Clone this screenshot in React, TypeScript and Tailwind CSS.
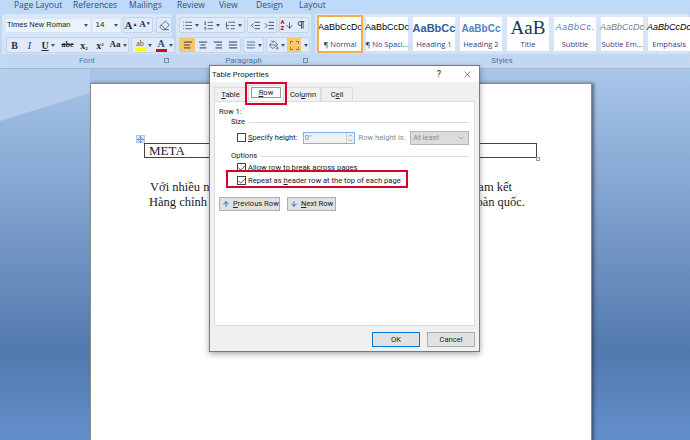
import React from "react";
import { AlignCenter, AlignLeft, AlignRight, AlignJustify, Check, ChevronDown, ChevronUp, IndentDecrease, IndentIncrease, List, ListOrdered, ListTree, Pilcrow, PaintBucket, X, Eraser, ArrowUp, ArrowDown, Move } from "lucide-react";

const Caret = () => <span className="w-0 h-0 border-l-[2.5px] border-r-[2.5px] border-t-[3px] border-l-transparent border-r-transparent border-t-[#44546a] ml-0.5" />;

const Btn = ({ w, active, children }: { w: string; active?: boolean; children: React.ReactNode }) => (
  <div className={`${w} h-[14px] flex items-center justify-center text-[#1f2f4a] ${active ? "bg-[#f8c86c]" : ""}`}>{children}</div>
);

const BtnGroup = ({ children }: { children: React.ReactNode }) => (
  <div className="flex h-[16px] items-center rounded-[2px] border border-[#c3d3e8] bg-[#dfeafa]">{children}</div>
);

const Group = ({ w, label, launcher, children }: { w: string; label: string; launcher?: boolean; children: React.ReactNode }) => (
  <div className={`${w} h-[55px] shrink-0 flex flex-col rounded-[3px] border border-[#c5d8ef] bg-gradient-to-b from-[#dbe8f9] to-[#cfe0f6]`}>
    <div className="flex-1 min-h-0">{children}</div>
    <div className="relative h-[13px] bg-[#c2d8f2] text-center text-[8px] leading-[13px] text-[#4f76ad]">
      {label}
      {launcher && <span className="absolute right-[3px] top-[4px] w-[5px] h-[5px] border border-[#6f8fb8]" />}
    </div>
  </div>
);

const styles = [
  { p: "AaBbCcDc", l: "¶ Normal", c: "text-[9px] text-black", sel: true },
  { p: "AaBbCcDc", l: "¶ No Spaci...", c: "text-[9px] text-black" },
  { p: "AaBbCc", l: "Heading 1", c: "text-[11px] font-bold text-[#2f5c94]" },
  { p: "AaBbCc", l: "Heading 2", c: "text-[10px] font-bold text-[#4f81bd]" },
  { p: "AaB", l: "Title", c: "text-[19px] text-[#17365d] font-['Liberation_Serif',serif]" },
  { p: "AaBbCc.", l: "Subtitle", c: "text-[9px] italic text-[#4f81bd] tracking-[0.5px]" },
  { p: "AaBbCcDc", l: "Subtle Em...", c: "text-[9px] italic text-[#808080]" },
  { p: "AaBbCcDc", l: "Emphasis", c: "text-[9px] italic text-black" },
];

const Box = ({ on }: { on?: boolean }) => (
  <span className="w-[9px] h-[9px] shrink-0 border border-[#444] bg-white flex items-center justify-center">
    {on && <Check size={10} strokeWidth={1.8} className="shrink-0 text-[#111]" />}
  </span>
);

const Section = ({ label }: { label: string }) => (
  <div className="flex items-center gap-[4px] ml-[12px] h-[10px]">
    <span className="whitespace-nowrap">{label}</span>
    <span className="flex-1 h-px bg-[#dcdcdc]" />
  </div>
);

const Tab = ({ children, cls }: { children: React.ReactNode; cls: string }) => (
  <div className={`h-[14px] flex items-center justify-center border border-b-0 border-[#dcdcdc] bg-[#f0f0f0] ${cls}`}>{children}</div>
);

export default function App() {
  return (
    <div className="relative w-[690px] h-[440px] overflow-hidden flex flex-col bg-[#a9c3e6] font-['Roboto',sans-serif] text-[7.6px] text-[#222]">
      {/* ribbon */}
      <div className="h-[69px] shrink-0 flex flex-col bg-[#bfd9f8] border-b border-[#9fbcd8]">
        <div className="h-[11px] flex items-center font-['Open_Sans',sans-serif] text-[8.5px] text-[#33517c]">
          <span className="ml-[14px] w-[59px]">Page Layout</span>
          <span className="w-[56px]">References</span>
          <span className="w-[48px]">Mailings</span>
          <span className="w-[42px]">Review</span>
          <span className="w-[37px]">View</span>
          <span className="w-[43px]">Design</span>
          <span>Layout</span>
        </div>
        <div className="h-px mt-[1px] bg-[#d7e5f7]" />
        <div className="flex gap-[2px] pl-[1px] pt-[1px]">
          <Group w="w-[172px]" label="Font" launcher>
            <div className="pl-[4px] pt-[4px] flex flex-col gap-[5px]">
              <div className="flex items-center gap-[3px] h-[14px]">
                <div className="w-[86px] h-[13px] bg-[#eaf2fc] flex items-center justify-between pl-[1px] pr-[2px] font-['Liberation_Sans',sans-serif] text-[7.5px]">
                  Times New Roman<Caret />
                </div>
                <div className="w-[27px] h-[13px] bg-[#eaf2fc] flex items-center justify-between px-[2px] font-['Liberation_Sans',sans-serif] text-[8px]">
                  14<Caret />
                </div>
                <BtnGroup>
                  <Btn w="w-[14px]"><span className="font-['Liberation_Serif',serif] font-bold text-[11px]">A<sup className="text-[5px]">▲</sup></span></Btn>
                  <Btn w="w-[14px]"><span className="font-['Liberation_Serif',serif] font-bold text-[9px]">A<sup className="text-[5px]">▼</sup></span></Btn>
                </BtnGroup>
                <BtnGroup>
                  <Btn w="w-[14px]"><Eraser size={11} strokeWidth={1.4} /></Btn>
                </BtnGroup>
              </div>
              <div className="flex items-center gap-[2px] h-[16px] font-['Liberation_Serif',serif] text-[10px]">
                <BtnGroup>
                  <Btn w="w-[15px]"><b>B</b></Btn>
                  <Btn w="w-[15px]"><i>I</i></Btn>
                  <Btn w="w-[22px]"><u className="font-bold">U</u><Caret /></Btn>
                  <Btn w="w-[17px]"><span className="line-through font-bold text-[8px]">abe</span></Btn>
                  <Btn w="w-[16px]"><b>x<sub className="text-[5px]">2</sub></b></Btn>
                  <Btn w="w-[16px]"><b>x<sup className="text-[5px]">2</sup></b></Btn>
                  <Btn w="w-[20px]"><b className="text-[9px]">Aa</b><Caret /></Btn>
                </BtnGroup>
                <BtnGroup>
                  <Btn w="w-[22px]"><span className="relative flex flex-col items-center"><span className="text-[8px] leading-[9px] text-[#5a5a20]">ab</span><span className="w-[11px] h-[3px] bg-[#ffff00]" /></span><Caret /></Btn>
                  <Btn w="w-[20px]"><span className="flex flex-col items-center"><b className="text-[#2a4a8a] text-[10px] leading-[10px]">A</b><span className="w-[11px] h-[3px] bg-[#e0001b]" /></span><Caret /></Btn>
                </BtnGroup>
              </div>
            </div>
          </Group>
          <Group w="w-[137px]" label="Paragraph" launcher>
            <div className="pl-[3px] pt-[4px] flex flex-col gap-[5px]">
              <div className="flex items-center gap-[2px] h-[14px]">
                <BtnGroup>
                  <Btn w="w-[21px]"><List size={11} strokeWidth={1.5} /><Caret /></Btn>
                  <Btn w="w-[21px]"><ListOrdered size={11} strokeWidth={1.5} /><Caret /></Btn>
                  <Btn w="w-[22px]"><ListTree size={11} strokeWidth={1.5} /><Caret /></Btn>
                </BtnGroup>
                <BtnGroup>
                  <Btn w="w-[14px]"><IndentDecrease size={11} strokeWidth={1.7} /></Btn>
                  <Btn w="w-[14px]"><IndentIncrease size={11} strokeWidth={1.7} /></Btn>
                </BtnGroup>
                <BtnGroup>
                  <Btn w="w-[14px]"><span className="flex items-center"><span className="text-[6px] leading-[6px] text-[#c00000] font-bold">A<br />Z</span><ArrowDown size={9} /></span></Btn>
                  <Btn w="w-[14px]"><Pilcrow size={10} strokeWidth={2} /></Btn>
                </BtnGroup>
              </div>
              <div className="flex items-center gap-[2px] h-[16px]">
                <BtnGroup>
                  <Btn w="w-[15px]" active><AlignLeft size={10} strokeWidth={2.2} /></Btn>
                  <Btn w="w-[15px]"><AlignCenter size={10} strokeWidth={2.2} /></Btn>
                  <Btn w="w-[15px]"><AlignRight size={10} strokeWidth={2.2} /></Btn>
                  <Btn w="w-[15px]"><AlignJustify size={10} strokeWidth={2.2} /></Btn>
                </BtnGroup>
                <BtnGroup>
                  <Btn w="w-[19px]"><span className="text-[#2a5fb0]"><AlignJustify size={10} strokeWidth={2} /></span><Caret /></Btn>
                </BtnGroup>
                <BtnGroup>
                  <Btn w="w-[20px]"><PaintBucket size={10} strokeWidth={1.4} /><Caret /></Btn>
                  <Btn w="w-[14px]" active><span className="w-[9px] h-[9px] border border-dashed border-[#a08030]" /></Btn>
                  <Btn w="w-[8px]"><Caret /></Btn>
                </BtnGroup>
              </div>
            </div>
          </Group>
          <Group w="w-[376px]" label="Styles">
            <div className="flex gap-[5px] pl-[4px] pt-[3px] font-['Liberation_Sans',sans-serif]">
              {styles.map((s) => (
                <div key={s.l} className={`w-[42px] h-[34px] shrink-0 bg-white flex flex-col items-center ${s.sel ? "outline-2 outline-[#efb04a]" : ""}`}>
                  <div className={`h-[22px] w-full flex items-center justify-center whitespace-nowrap ${s.c}`}>{s.p}</div>
                  <div className="text-[7.5px] leading-[10px] text-[#2c3f7c] whitespace-nowrap font-['Open_Sans',sans-serif]">{s.l}</div>
                </div>
              ))}
            </div>
          </Group>
        </div>
      </div>

      {/* workspace */}
      <div className="relative flex-1 min-h-0 pl-[90px] pt-[14px] bg-[linear-gradient(to_bottom,#a9c6ea_0%,#5279ae_76%,#638fcb_100%)]">
        <div className="absolute left-0 top-0 w-[90px] h-[52px] bg-[#b6cdeb] [clip-path:polygon(0_0,100%_0,100%_46%,0_100%)]" />
        <div className="relative w-[502px] h-[400px] bg-white border border-[#8a8a8a] shadow-[2px_0_3px_rgba(40,50,70,0.6)] pl-[53px] pr-[54px] pt-[59px] font-['Liberation_Serif',serif] text-[12.5px] text-[#222]">
          <div className="relative h-[15px] border border-[#444] pl-[4px] leading-[13px] text-[13px]">
            META
            <span className="absolute -left-[9px] -top-[9px] w-[9px] h-[8px] bg-[#dfe7f3] border border-[#b8c4d8] flex items-center justify-center text-[#3a6cc0]"><Move size={7} strokeWidth={2} /></span>
            <span className="absolute -right-[4px] -bottom-[4px] w-[4px] h-[4px] bg-white border border-[#999]" />
          </div>
          <div className="mt-[22px] pl-[6px] pr-[25px] flex justify-between leading-[15px]"><span>Với nhiều năm</span><span>cam kết</span></div>
          <div className="pl-[5px] pr-[12px] flex justify-between leading-[15px]"><span>Hàng chính hãng</span><span>toàn quốc.</span></div>
        </div>
      </div>

      {/* dialog */}
      <div className="absolute left-[209px] top-[65px] w-[271px] h-[287px] bg-[#f0f0f0] border border-[#7a7a7a] shadow-[0_2px_6px_rgba(0,0,0,0.35)] flex flex-col">
        <div className="h-[16px] bg-white flex items-center pl-[2px] pt-[1px] text-[7.8px] text-[#222] shrink-0">
          <span className="flex-1">Table Properties</span>
          <span className="mr-[21px] text-[9px]">?</span>
          <X size={11} strokeWidth={1.2} className="mr-[6px]" />
        </div>
        <div className="flex px-[4px] mt-[4px] h-[15px] items-end shrink-0">
          <Tab cls="w-[33px]"><span><u>T</u>able</span></Tab>
          <div className="relative w-[36px] h-[16px] mx-[1px] bg-white border border-[#dcdcdc] border-b-0 flex items-center justify-center">
            <span className="mb-[2px] px-[7px] border border-[#9a9a9a] leading-[9px]"><u>R</u>ow</span>
            <span className="absolute -left-[4px] -top-[4px] w-[42px] h-[23px] border-[2px] border-[#d8002c]" />
          </div>
          <Tab cls="w-[36px]"><span>Col<u>u</u>mn</span></Tab>
          <Tab cls="w-[32px]"><span>C<u>e</u>ll</span></Tab>
        </div>
        <div className="h-[225px] mx-[4px] bg-white border border-[#dcdcdc] flex flex-col pl-[4px] pr-[5px] pt-[4px] shrink-0">
          <div className="h-[11px] leading-[11px]">Row 1:</div>
          <Section label="Size" />
          <div className="flex items-center mt-[4px] ml-[18px] h-[13px]">
            <Box />
            <span className="ml-[2px] w-[55px] whitespace-nowrap"><u>S</u>pecify height:</span>
            <div className="w-[52px] h-[12px] border border-[#7eb4ea] bg-[#f0f0f0] flex items-center justify-between pl-[1px] text-[#8a8a8a]">
              0"
              <span className="w-[8px] h-full flex flex-col items-center justify-center border-l border-[#ccc] text-[#555]"><ChevronUp size={5} strokeWidth={2.5} /><ChevronDown size={5} strokeWidth={2.5} /></span>
            </div>
            <span className="ml-[4px] w-[52px] text-[#8a8a8a] whitespace-nowrap">Row height is:</span>
            <div className="w-[59px] h-[14px] bg-[#dcdcdc] border border-[#b5b5b5] flex items-center justify-between pl-[2px] text-[#8a8a8a]">
              At least
              <ChevronDown size={8} className="mr-[3px]" />
            </div>
          </div>
          <div className="mt-[7px]"><Section label="Options" /></div>
          <div className="flex items-center gap-[2px] ml-[18px] mt-[1px] h-[11px]"><Box on /><span>Allow row to break across pages</span></div>
          <div className="relative flex items-center gap-[2px] ml-[18px] h-[13px] mt-[1px]">
            <Box on /><span>Repeat as <u>h</u>eader row at the top of each page</span>
            <span className="absolute -left-[11px] -top-[4px] w-[182px] h-[18px] border-[2px] border-[#d8002c]" />
          </div>
          <div className="flex gap-[7px] mt-[10px]">
            <div className="w-[61px] h-[14px] bg-[#e1e1e1] border border-[#adadad] flex items-center pl-[2px] gap-[3px] whitespace-nowrap"><ArrowUp size={8} strokeWidth={3} className="shrink-0 text-[#2b6fd0]" /><span><u>P</u>revious Row</span></div>
            <div className="w-[49px] h-[14px] bg-[#e1e1e1] border border-[#adadad] flex items-center pl-[2px] gap-[3px] whitespace-nowrap"><ArrowDown size={8} strokeWidth={3} className="shrink-0 text-[#2b6fd0]" /><span><u>N</u>ext Row</span></div>
          </div>
        </div>
        <div className="flex justify-end gap-[7px] pr-[4px] pt-[6px]">
          <div className="w-[48px] h-[15px] bg-[#e1e1e1] border-[1.5px] border-[#0078d7] flex items-center justify-center">OK</div>
          <div className="w-[48px] h-[15px] bg-[#e1e1e1] border border-[#adadad] flex items-center justify-center">Cancel</div>
        </div>
      </div>
    </div>
  );
}
